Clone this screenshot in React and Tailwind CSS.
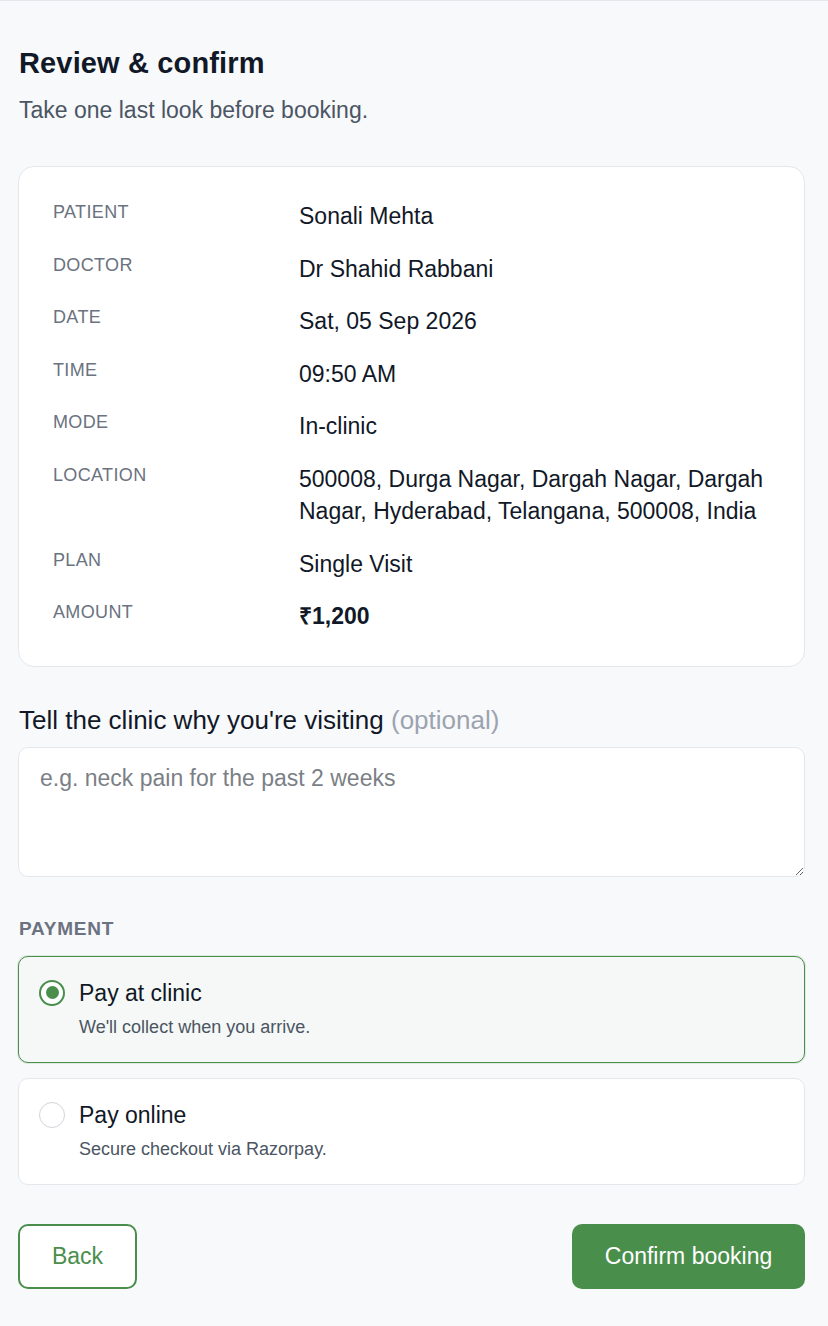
const details = [
  { label: "Patient", value: "Sonali Mehta" },
  { label: "Doctor", value: "Dr Shahid Rabbani" },
  { label: "Date", value: "Sat, 05 Sep 2026" },
  { label: "Time", value: "09:50 AM" },
  { label: "Mode", value: "In-clinic" },
  {
    label: "Location",
    value:
      "500008, Durga Nagar, Dargah Nagar, Dargah Nagar, Hyderabad, Telangana, 500008, India",
  },
  { label: "Plan", value: "Single Visit" },
  { label: "Amount", value: "₹1,200", bold: true },
];

const options = [
  { id: "clinic", title: "Pay at clinic", note: "We'll collect when you arrive." },
  { id: "online", title: "Pay online", note: "Secure checkout via Razorpay." },
];

function Radio({ checked }) {
  return (
    <span
      className={
        "mt-[3px] flex h-[26px] w-[26px] shrink-0 items-center justify-center rounded-full bg-white " +
        (checked ? "border-2 border-[#4a8e4c]" : "border border-[#d1d5db]")
      }
    >
      {checked && <span className="h-[13px] w-[13px] rounded-full bg-[#4a8e4c]" />}
    </span>
  );
}

export default function App() {
  const selected = "clinic";

  return (
    <div className="min-h-screen border-t border-[#e5e7eb] bg-[#f8f9fb] font-['Liberation_Sans',Arial,sans-serif] text-[#111827] antialiased">
      <main className="pl-[18px] pr-[23px] pt-[45px] pb-[36px]">
        {/* Heading */}
        <h1 className="pl-px text-[29px] font-bold leading-[35px] tracking-[0.005em] text-[#111827]">
          Review &amp; confirm
        </h1>
        <p className="mt-[14px] pl-px text-[23px] leading-[30px] text-[#4b5563]">
          Take one last look before booking.
        </p>

        {/* Summary card */}
        <div className="mt-[41px] flex flex-col gap-[20px] rounded-[16px] border border-[#e5e7eb] bg-white pl-[34px] pr-[33px] py-[33px]">
          {details.map((row) => (
            <div key={row.label} className="grid grid-cols-[246px_1fr] items-start">
              <span className="text-[18px] uppercase leading-[24px] tracking-[0.02em] text-[#6b7280]">
                {row.label}
              </span>
              <span
                className={
                  "text-[23px] leading-[32.5px] text-[#111827] " + (row.bold ? "font-bold" : "")
                }
              >
                {row.value}
              </span>
            </div>
          ))}
        </div>

        {/* Reason */}
        <label className="mt-[36px] block pl-px text-[26px] leading-[34px] text-[#111827]">
          Tell the clinic why you're visiting <span className="text-[#9ca3af]">(optional)</span>
        </label>
        <textarea
          rows={3}
          placeholder="e.g. neck pain for the past 2 weeks"
          className="mt-[10px] block h-[130px] w-full rounded-[10px] border border-[#e5e7eb] bg-white px-[21px] py-[15px] text-[23px] leading-[30px] text-[#111827] outline-none placeholder:text-[#7b7f86]"
        />

        {/* Payment */}
        <h2 className="mt-[38px] pl-px text-[19px] font-bold uppercase leading-[27px] tracking-[0.04em] text-[#6b7280]">
          Payment
        </h2>
        <div className="mt-[14px] flex flex-col gap-[15px]">
          {options.map((opt) => {
            const active = opt.id === selected;
            return (
              <div
                key={opt.id}
                className={
                  "flex gap-[14px] rounded-[10px] border px-[20px] pt-[20px] pb-[22px] " +
                  (active
                    ? "border-[#4a8e4c] bg-[#f5f8f6] shadow-[0_0_0_1px_rgba(74,142,76,0.15)]"
                    : "border-[#e5e7eb] bg-white")
                }
              >
                <Radio checked={active} />
                <div>
                  <div className="text-[23px] leading-[33px] text-[#111827]">{opt.title}</div>
                  <div className="mt-[4px] text-[18px] leading-[26px] text-[#4b5563]">{opt.note}</div>
                </div>
              </div>
            );
          })}
        </div>

        {/* Actions */}
        <div className="mt-[39px] flex items-center justify-between">
          <button className="h-[65px] w-[119px] rounded-[10px] border-2 border-[#4a8e4c] bg-white text-[23px] text-[#4a8e4c]">
            Back
          </button>
          <button className="h-[65px] w-[233px] rounded-[10px] bg-[#4a8e4c] text-[23px] text-white">
            Confirm booking
          </button>
        </div>
      </main>
    </div>
  );
}
